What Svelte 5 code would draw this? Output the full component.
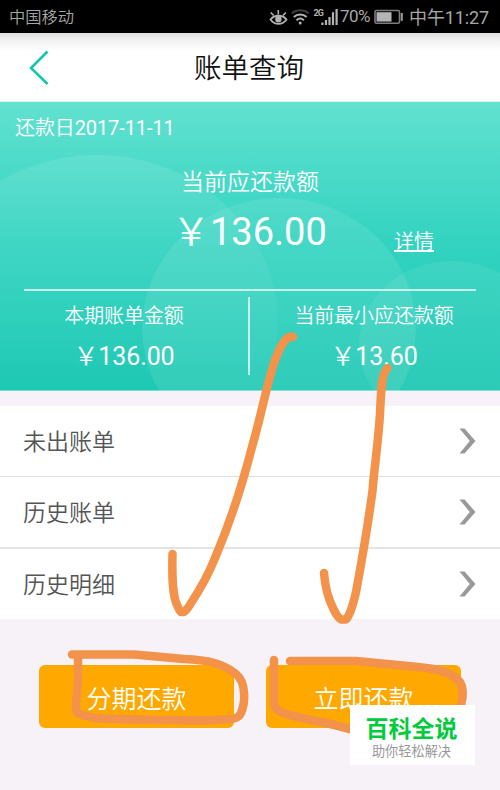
<script>
	let rows = ['未出账单', '历史账单', '历史明细'];

	let totals = [
		{ label: '本期账单金额', amount: '136.00' },
		{ label: '当前最小应还款额', amount: '13.60' }
	];
</script>

<main class="screen">
	<div class="status">
		<span class="carrier">中国移动</span>
		<svg class="status-icons" width="78" height="24" viewBox="0 0 78 24" fill="none" stroke="#b3b3b3">
			<!-- eye -->
			<path d="M1.5 14.5c4-5 12-5 16 0-4 5.8-12 5.8-16 0Z" stroke-width="1.8" />
			<path d="M9.3 9.5V5M4.6 10.5 1.8 7.5M14 10.5l2.8-3" stroke-width="1.6" />
			<circle cx="9.4" cy="14.3" r="3.2" fill="#b3b3b3" stroke="none" />
			<!-- wifi -->
			<path d="M22.8 8.3c4.5-4 12.3-4 16.8 0" stroke="#3c3c3c" stroke-width="2" />
			<path d="M24.8 12c3.5-3.3 9.3-3.3 12.8 0M27.5 15.3c2.2-2 5.2-2 7.4 0" stroke-width="1.9" />
			<circle cx="31.2" cy="18.1" r="1.5" fill="#b3b3b3" stroke="none" />
			<!-- signal -->
			<text class="network" x="44.5" y="10.5">2G</text>
			<path d="M53.4 20v-2.5M57 20v-4.9M60.5 20v-8.1M64 20V7.2M67.6 20V4" stroke-width="2.2" />
		</svg>
		<span class="percent">70%</span>
		<svg class="battery" width="29" height="16" viewBox="0 0 29 16">
			<rect x="1" y="1.5" width="24.5" height="12.8" rx="1.5" fill="none" stroke="#7d7d7d" stroke-width="1.6" />
			<rect x="2.5" y="3.2" width="15" height="9.4" fill="#b5b5b5" />
			<rect x="26.8" y="4" width="2" height="7.8" fill="#9b9b9b" />
		</svg>
		<span class="clock">中午11:27</span>
	</div>

	<header class="bar">
		<svg class="back" width="22" height="38" viewBox="0 0 22 38">
			<path d="M19.5 2.5 3 19l16.5 16" fill="none" stroke="#12c5b1" stroke-width="2.5" />
		</svg>
		<h1>账单查询</h1>
	</header>

	<section class="summary">
		<svg class="bubbles" width="500" height="289" viewBox="0 102 500 289" fill="#fff">
			<defs>
				<linearGradient id="fade" gradientUnits="userSpaceOnUse" x1="0" y1="155" x2="0" y2="391">
					<stop offset="0" stop-color="#fff" stop-opacity=".1" />
					<stop offset="1" stop-color="#fff" stop-opacity=".01" />
				</linearGradient>
			</defs>
			<ellipse cx="97" cy="324" rx="181" ry="169" fill="url(#fade)" />
			<ellipse cx="279" cy="328" rx="137" ry="130" fill-opacity=".09" />
			<ellipse cx="452" cy="345" rx="93" ry="84" fill-opacity=".07" />
		</svg>
		<p class="due-date">还款日<span class="num">2017-11-11</span></p>
		<p class="due-label">当前应还款额</p>
		<div class="due-row">
			<p class="due-amount">￥<span class="num">136.00</span></p>
			<a class="detail" href="#detail">详情</a>
		</div>
		<div class="totals">
			{#each totals as total}
				<div class="total">
					<p class="total-label">{total.label}</p>
					<p class="total-amount">￥<span class="num">{total.amount}</span></p>
				</div>
			{/each}
		</div>
	</section>

	<nav class="list">
		{#each rows as row}
			<div class="row">
				<span>{row}</span>
				<svg width="17" height="26" viewBox="0 0 17 26">
					<path d="M.5.5h5L16.5 13l-11 12.5h-5L10.8 13Z" fill="#999" />
				</svg>
			</div>
		{/each}
	</nav>

	<div class="actions">
		<button>分期还款</button>
		<button>立即还款</button>
	</div>

	<!-- pen marks over the page -->
	<svg class="marks" width="500" height="790" viewBox="0 0 500 790">
		<path d="M293 337C285 334 278 352 274 363C267 384 260 420 252 447C243 482 230 523 215 558C207 578 199 591 191 603Q187 610 184 612H181Q179 610 178 607C172 597 172 574 172.5 554" />
		<path d="M387.5 368C381 373 381 395 380 414C378 445 374 470 372.5 491C368 524 362 560 356 592Q351 614 346 619.5H341Q337 617 333 608C327 596 325 586 324 573" />
		<path d="M72 654.5H134L184 659C208 660 222 663 236 674C247 683 245 704 241 713Q239 718 232 719L204 720.5L155 720L98 718.5C84 716 77 715 76 709C76 697 78 687 78 676V656" />
		<path d="M290 661H356L418 667C441 669 452 673 460 682Q465 690 461 705L454 723C440 738 399 741 372 735C351 730 337 725 321 722C297 717 276 714 274 705V660" />
	</svg>

	<aside class="badge">
		<strong>百科全说</strong>
		<span>助你轻松解决</span>
	</aside>
</main>

<style>
	:global(body) {
		background: #f6f2f7;
	}

	.screen {
		position: relative;
		width: 500px;
		height: 790px;
		overflow: hidden;
		background: #f6f2f7;
		font-family: Roboto, 'Noto Sans CJK SC', sans-serif;
		font-weight: 350;
	}

	p,
	h1 {
		margin: 0;
		font-weight: inherit;
	}

	.num {
		font-weight: 400;
	}

	.status {
		display: flex;
		align-items: center;
		height: 33px;
		padding: 0 10px 0 9px;
		background: #000;
		color: #a6a6a6;
		white-space: nowrap;
	}

	.carrier {
		margin-right: auto;
		font-size: 16.3px;
		line-height: 33px;
		padding-top: 2px;
	}

	.status-icons {
		flex: none;
		margin-right: -7px;
	}

	.network {
		font: 700 9px Roboto, sans-serif;
		fill: #b3b3b3;
		stroke: none;
		letter-spacing: -1px;
	}

	.percent {
		width: 33px;
		font-size: 17px;
		font-weight: 400;
		letter-spacing: -0.6px;
		padding-bottom: 1px;
	}

	.battery {
		flex: none;
		margin: 0 6px 0 1px;
	}

	.clock {
		width: 81px;
		font-size: 18px;
		font-weight: 400;
		letter-spacing: -0.1px;
		line-height: 33px;
		padding-top: 1px;
	}

	.bar {
		display: grid;
		grid-template-columns: 60px 1fr 60px;
		align-items: center;
		box-sizing: border-box;
		height: 69px;
		border-bottom: 1px solid #dff5f2;
		background: linear-gradient(#dedede, #f3f3f3 8px, #fff 18px);
	}

	.back {
		margin-left: 28px;
	}

	h1 {
		color: #111;
		font-size: 27.5px;
		line-height: 66px;
		padding: 3px 2px 0 0;
		text-align: center;
	}

	.summary {
		position: relative;
		box-sizing: border-box;
		height: 289px;
		padding-top: 13px;
		border-bottom: 1px solid #75dccf;
		background: linear-gradient(#62e1d0, #32d3c0 50%, #1bc8b3);
		color: #fff;
	}

	.summary > :not(svg) {
		position: relative;
	}

	.bubbles {
		position: absolute;
		inset: 0;
	}

	.due-date {
		padding-left: 15px;
		font-size: 20px;
		letter-spacing: -0.1px;
		line-height: 26px;
	}

	.due-label {
		margin-top: 27px;
		font-size: 23px;
		line-height: 30px;
		text-align: center;
	}

	.due-row {
		display: grid;
		grid-template-columns: 394px 1fr;
		height: 91px;
	}

	.due-amount {
		padding-left: 172px;
		font-size: 38px;
		line-height: 69px;
	}

	.detail {
		margin-top: 29px;
		color: #fff;
		font-size: 20px;
		line-height: 30px;
		text-underline-offset: 1px;
	}

	.totals {
		display: grid;
		grid-template-columns: 224px 1fr;
		margin: 0 24px;
		padding-top: 6px;
		border-top: 2px solid #c9f2ec;
	}

	.total {
		height: 78px;
		text-align: center;
	}

	.total + .total {
		padding-left: 22px;
		border-left: 2px solid #c9f2ec;
	}

	.total:first-child {
		padding-right: 24px;
	}

	.total-label {
		font-size: 20px;
		line-height: 38px;
		letter-spacing: -0.1px;
	}

	.total-amount {
		font-size: 25px;
		letter-spacing: -0.1px;
		line-height: 43px;
	}

	.list {
		margin-top: 15px;
		background: #fff;
	}

	.row {
		display: flex;
		align-items: center;
		justify-content: space-between;
		box-sizing: border-box;
		height: 71px;
		padding: 0 24px 0 23px;
		color: #555;
		font-size: 23px;
	}

	.row span {
		padding-bottom: 3px;
	}

	.row:not(:last-child) {
		border-bottom: 1px solid #dedede;
	}

	.row:nth-child(2) {
		height: 72px;
		border-bottom: 2px solid #e3e3e3;
	}

	.row:last-child {
		height: 70px;
	}

	.actions {
		display: grid;
		grid-template-columns: 195px 195px;
		gap: 32px;
		padding: 46px 0 0 39px;
	}

	button {
		height: 63px;
		padding: 0;
		border: 0;
		border-radius: 6px;
		background: #ffa800;
		color: #fff;
		font: inherit;
		font-size: 25px;
	}

	.marks {
		position: absolute;
		inset: 0;
		fill: none;
		stroke: #f3924a;
		stroke-width: 8.5px;
		stroke-linecap: round;
		stroke-linejoin: round;
		pointer-events: none;
	}

	.badge {
		position: absolute;
		left: 350px;
		top: 705px;
		display: flex;
		flex-direction: column;
		align-items: center;
		box-sizing: border-box;
		width: 125px;
		height: 60px;
		padding: 10px 2px 0 0;
		background: #fff;
	}

	.badge strong {
		color: #00cb3c;
		font-size: 23px;
		font-weight: 700;
		line-height: 30px;
	}

	.badge span {
		color: #999;
		font-size: 13.2px;
		font-weight: 400;
		line-height: 14px;
	}
</style>
